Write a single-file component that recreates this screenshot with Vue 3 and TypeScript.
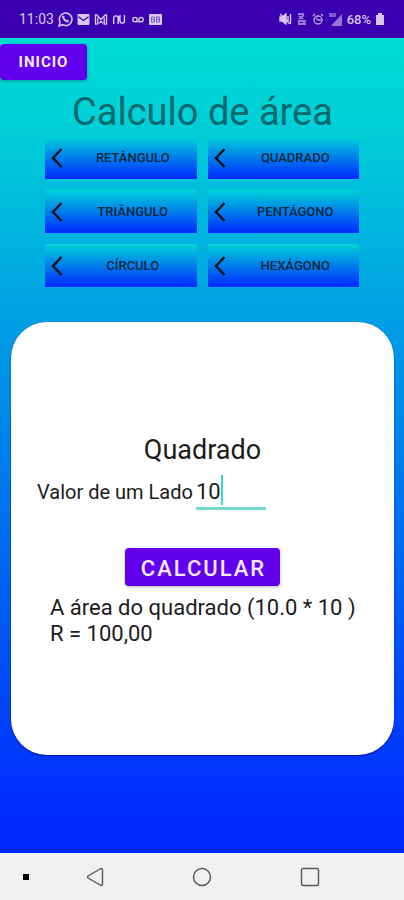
<script setup lang="ts">
import { computed, ref } from 'vue'

const shapes: string[] = ['Retângulo', 'Quadrado', 'Triângulo', 'Pentágono', 'Círculo', 'Hexágono']
const selected = ref('Quadrado')
const side = ref('10')
const calculated = ref('10')

const formula = computed(() => {
  const value = Number(calculated.value) || 0
  return `A área do quadrado (${value.toFixed(1)} * ${calculated.value} )`
})
const result = computed(() => {
  const value = Number(calculated.value) || 0
  return `R = ${(value * value).toFixed(2).replace('.', ',')}`
})

function calculate(): void {
  calculated.value = side.value
}
</script>

<template>
  <div class="screen">
    <header class="status">
      <div class="status-left">
        <span class="clock">11:03</span>
        <svg width="15" height="16" viewBox="0 0 15 16" fill="none" stroke="currentColor" stroke-width="1.5">
          <path d="M1 15l1-4a6.3 6.3 0 1 1 2.500 2.700z" />
          <path d="M5 5c0 3 2.500 5.500 5.500 5.500M5 5l1 1.500M10.500 10.500l-2-1" stroke-width="2" />
        </svg>
        <svg width="13" height="11" viewBox="0 0 13 12">
          <rect width="13" height="12" rx="1" fill="currentColor" />
          <path d="M1 3l5.500 4L12 3" fill="none" stroke="#3a00b0" stroke-width="1.300" />
        </svg>
        <svg width="14" height="11" viewBox="0 0 14 12" fill="none" stroke="currentColor" stroke-width="1.500">
          <path d="M3.500 11H1V1h1.500L7 6l4.500-5H13v10h-2.500V4M3.500 4v7M5 10l2-2 2 2" />
        </svg>
        <svg width="15" height="9" viewBox="0 0 15 10" fill="none" stroke="currentColor" stroke-width="1.600">
          <path d="M1 10V4q0-3 2.500-3T6 4v6M8 0v6q0 3 2.500 3T13 6V0M3.500 1q4 0 4 5" />
        </svg>
        <svg width="14" height="7" viewBox="0 0 14 8" fill="none" stroke="currentColor" stroke-width="1.500">
          <circle cx="3.500" cy="4" r="2.500" /><circle cx="10.500" cy="4" r="2.500" /><path d="M3.500 6.500h7" />
        </svg>
        <svg width="13" height="11" viewBox="0 0 13 11">
          <rect width="13" height="11" rx="1" fill="currentColor" />
          <path d="M2.500 3h3v5h-3zM7.500 3h3v5h-3zM2.500 5.500h3M7.500 5.500h3" fill="none" stroke="#7d5bca" />
        </svg>
      </div>
      <div class="status-right">
        <svg width="13" height="12" viewBox="0 0 13 12" fill="none" stroke="currentColor" stroke-width="1.400">
          <path d="M1 4h2l4-3v10L3 8H1z" fill="currentColor" /><path d="M1 1l10 10M9 3v6M11.500 1v10" />
        </svg>
        <svg class="faint" width="10" height="12" viewBox="0 0 10 12" fill="none" stroke="currentColor" stroke-width="1.900">
          <path d="M1 1h6M2 3l4 3M7 2L2 6M1 8h8M1 11h8M5 7l3 4M2 7v4" />
        </svg>
        <svg class="dim" width="12" height="12" viewBox="0 0 12 12" fill="none" stroke="currentColor" stroke-width="1.400">
          <circle cx="6" cy="7" r="4" /><path d="M1 3l2-2M11 3L9 1M4 5l2 2h3" />
        </svg>
        <svg class="faint" width="13" height="13" viewBox="0 0 13 13">
          <path d="M13 1v12H2z" fill="currentColor" /><path d="M0 1h7M0 3h7" stroke="currentColor" stroke-width="1.700" />
        </svg>
        <span class="battery-text">68%</span>
        <svg width="8" height="12" viewBox="0 0 8 12" fill="currentColor">
          <path d="M2 0h4v2h2v10H0V2h2z" />
        </svg>
      </div>
    </header>

    <main class="content">
      <button class="primary home" type="button">INICIO</button>
      <h1 class="title">Calculo de área</h1>

      <nav class="shapes" aria-label="Formas">
        <button v-for="shape in shapes" :key="shape" class="shape" type="button" @click="selected = shape">
          <svg width="12" height="20" viewBox="0 0 12 20" fill="none" stroke="#041018" stroke-width="2.400">
            <path d="M10.500 1L2 10l8.500 9" />
          </svg>
          <span class="shape-name">{{ shape }}</span>
        </button>
      </nav>

      <form class="card" @submit.prevent="calculate">
        <h2 class="card-title">{{ selected }}</h2>
        <div class="field">
          <label for="side">Valor de um Lado</label>
          <div class="entry">
            <input id="side" v-model="side" type="text" inputmode="decimal" autocomplete="off" />
            <span class="caret" aria-hidden="true"></span>
          </div>
        </div>
        <button class="primary calculate" type="submit">CALCULAR</button>
        <output class="result" for="side">
          <span>{{ formula }}</span>
          <span>{{ result }}</span>
        </output>
      </form>
    </main>

    <footer class="system-nav">
      <span class="dot"></span>
      <button type="button" aria-label="Voltar">
        <svg width="18" height="20" viewBox="0 0 18 20" fill="none" stroke="#555" stroke-width="1.400" stroke-linejoin="round">
          <path d="M15 1.500L2 9q-1 1 0 2l13 7.500q1.500 0 1.500-1.500V3q0-1.500-1.500-1.500z" />
        </svg>
      </button>
      <button type="button" aria-label="Tela inicial">
        <svg width="20" height="20" viewBox="0 0 20 20" fill="none" stroke="#555" stroke-width="1.400">
          <circle cx="10" cy="10" r="8.500" />
        </svg>
      </button>
      <button type="button" aria-label="Recentes">
        <svg width="20" height="20" viewBox="0 0 20 20" fill="none" stroke="#555" stroke-width="1.400">
          <rect x="1.500" y="1.500" width="17" height="17" rx="1.500" />
        </svg>
      </button>
    </footer>
  </div>
</template>

<style>
body {
  margin: 0;
}
</style>

<style scoped>
.screen {
  display: flex;
  flex-direction: column;
  min-height: 100vh;
  font-family: Roboto, 'Liberation Sans', sans-serif;
  color: #1c1c1c;
}
.screen * {
  box-sizing: border-box;
}
button {
  font-family: inherit;
  border: 0;
  padding: 0;
  cursor: pointer;
}
.status {
  display: flex;
  align-items: center;
  justify-content: space-between;
  height: 38px;
  padding: 0 20px 0 19px;
  background: #3a00b0;
  color: #d6c8f2;
  font-size: 14px;
}
.status-left,
.status-right {
  display: flex;
  align-items: center;
  gap: 4px;
}
.status-right {
  gap: 5px;
}
.dim {
  opacity: 0.8;
}
.faint {
  opacity: 0.6;
}
.battery-text {
  font-size: 13px;
  font-weight: 500;
}
.content {
  flex: 1;
  display: flex;
  flex-direction: column;
  padding: 6px 10px 98px 11px;
  background: linear-gradient(#00dcd4, #00d0d7 10%, #00a0e4 34%, #0028ff 97%);
}
.primary {
  background: #6200ee;
  color: #f4eaff;
  font-weight: 500;
  border-radius: 4px;
  box-shadow: 0 1px 3px rgba(0, 0, 0, 0.3);
}
.home {
  align-self: flex-start;
  margin-left: -11px;
  width: 87px;
  height: 36px;
  font-size: 15px;
  font-weight: 700;
  letter-spacing: 1px;
}
.title {
  margin: 9px 0 0;
  font-size: 38px;
  line-height: 47px;
  font-weight: 400;
  text-align: center;
  color: #04686f;
}
.shapes {
  display: grid;
  grid-template-columns: 1fr 1fr;
  gap: 11px;
  margin: 0 35px 0 34px;
}
.shape {
  display: flex;
  align-items: center;
  height: 43px;
  padding: 0 6px;
  background: linear-gradient(#00d4d8, #0028ff);
  color: #06283c;
  font-size: 13px;
  font-weight: 500;
}
.shape-name {
  flex: 1;
  padding-left: 12px;
  text-align: center;
  text-transform: uppercase;
}
.card {
  flex: 1;
  display: flex;
  flex-direction: column;
  align-items: center;
  margin-top: 35px;
  padding: 111px 26px 32px;
  background: #fff;
  border-radius: 36px;
  box-shadow: 0 1px 2px rgba(0, 0, 90, 0.6);
}
.card-title {
  margin: 0;
  font-size: 27px;
  line-height: 34px;
  font-weight: 400;
}
.field {
  display: flex;
  align-self: stretch;
  align-items: center;
  gap: 3px;
  margin-top: 7px;
  font-size: 20px;
}
.entry {
  position: relative;
  width: 70px;
}
.entry input {
  display: block;
  width: 100%;
  height: 36px;
  padding: 2px 0 0;
  border: 0;
  border-bottom: 3px solid #6fd9cc;
  background: transparent;
  color: inherit;
  font-family: inherit;
  font-size: 22px;
  outline: none;
}
.caret {
  position: absolute;
  top: 1px;
  left: 25px;
  width: 2px;
  height: 30px;
  background: #35dcc8;
}
.calculate {
  width: 155px;
  height: 38px;
  margin-top: 38px;
  padding: 2px 0 0 2px;
  font-size: 22px;
  letter-spacing: 2px;
}
.result {
  display: flex;
  flex-direction: column;
  align-self: stretch;
  margin-top: 9px;
  padding-left: 13px;
  font-size: 22px;
  line-height: 26px;
  white-space: nowrap;
}
.system-nav {
  display: grid;
  grid-template-columns: 26fr 43fr 64fr 44fr 25fr;
  align-items: center;
  justify-items: center;
  height: 47px;
  background: #f0f0f0;
}
.system-nav button {
  display: flex;
  background: transparent;
}
.dot {
  width: 6px;
  height: 6px;
  background: #000;
}
</style>
